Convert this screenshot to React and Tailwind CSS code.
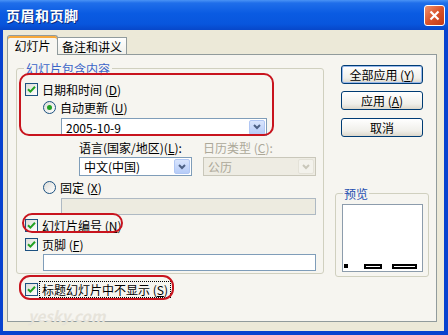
import React from 'react'

function Check({ checked = true }) {
  return (
    <span className="w-[13px] h-[13px] shrink-0 border border-[#1C5180] bg-[linear-gradient(135deg,#DCDCD7,#FFFFFF)] flex items-center justify-center">
      {checked && (
        <svg width="9" height="9" viewBox="0 0 9 9">
          <path d="M1 4.2 L3.4 6.6 L8 1.8" stroke="#21A121" strokeWidth="2" fill="none" />
        </svg>
      )}
    </span>
  )
}

function Radio({ checked }) {
  return (
    <span className="w-[13px] h-[13px] shrink-0 rounded-full border border-[#1C5180] bg-[linear-gradient(135deg,#DCDCD7,#FFFFFF)] flex items-center justify-center">
      {checked && <span className="w-[5px] h-[5px] rounded-full bg-[#21A121]" />}
    </span>
  )
}

function Arrow({ disabled }) {
  return (
    <span
      className={
        disabled
          ? 'w-[16px] h-[15px] rounded-[2px] border border-[#E4E2D8] bg-[#F3F2EC] flex items-center justify-center'
          : 'w-[16px] h-[15px] rounded-[2px] border border-[#B1C7F4] bg-[linear-gradient(to_bottom,#D9E5FD,#B6CCF8)] flex items-center justify-center'
      }
    >
      <svg width="8" height="6" viewBox="0 0 8 6">
        <path d="M1 1 L4 4 L7 1" stroke={disabled ? '#C9C7BA' : '#4D6185'} strokeWidth="2" fill="none" />
      </svg>
    </span>
  )
}

function Combo({ value, className, disabled }) {
  return (
    <div
      className={
        (disabled
          ? 'border-[#C9C7BA] bg-[#EEECE3] text-[#ACA899] '
          : 'border-[#7F9DB9] bg-white text-black ') +
        'border flex items-center justify-between pl-[4px] pr-[1px] ' +
        className
      }
    >
      <span>{value}</span>
      <Arrow disabled={disabled} />
    </div>
  )
}

function Btn({ children, def }) {
  return (
    <button
      className={
        'w-[82px] h-[19px] rounded-[3px] border border-[#003C74] bg-[linear-gradient(to_bottom,#FFFFFF,#F0EFEA_70%,#DCD7CB)] flex items-center justify-center text-black ' +
        (def ? 'shadow-[inset_0_0_0_1px_#98B8EA]' : '')
      }
    >
      {children}
    </button>
  )
}

export default function App() {
  return (
    <div className="w-[448px] h-[335px] flex flex-col bg-[#0842CF] font-['Noto_Sans_CJK_SC','Liberation_Sans',sans-serif] text-[12px] leading-[13px] text-black">
      <div className="h-[30px] shrink-0 flex items-center justify-between pl-[6px] pr-[3px] bg-[linear-gradient(to_bottom,#4A93F5_0%,#1F6EEA_10%,#0A5BE2_45%,#0856DD_80%,#0747C9_100%)]">
        <span className="text-white font-bold text-[14px] tracking-[0.5px] [text-shadow:1px_1px_0_#0A2A80]">页眉和页脚</span>
        <span className="w-[21px] h-[21px] rounded-[3px] border border-white bg-[linear-gradient(135deg,#F0926E,#D9532B_50%,#C13A16)] flex items-center justify-center">
          <svg width="11" height="11" viewBox="0 0 11 11">
            <path d="M1.5 1.5 L9.5 9.5 M9.5 1.5 L1.5 9.5" stroke="white" strokeWidth="2.2" />
          </svg>
        </span>
      </div>

      <div className="flex-1 ml-[3px] mr-[4px] mb-[4px] bg-[#ECE9D8] pl-[4px] pr-[7px] pt-[5px] flex flex-col">
        <div className="flex items-end h-[19px]">
          <div className="relative z-10 -mb-px h-[20px] w-[51px] border border-b-0 border-[#919B9C] bg-[#F7F6F1] rounded-t-[3px] shadow-[inset_0_2px_0_#F7A839] flex items-center justify-center">
            幻灯片
          </div>
          <div className="h-[17px] w-[69px] border border-b-0 border-l-0 border-[#919B9C] bg-[linear-gradient(to_bottom,#FFFFFF,#F0F0EA)] flex items-center justify-center">
            备注和讲义
          </div>
        </div>

        <div className="relative h-[268px] border border-[#919B9C] bg-[#F6F5F0] flex items-start">
          <div className="ml-[8px] mt-[13px] flex flex-col">
            <div className="relative w-[308px] h-[206px] border border-[#D0D0BF] rounded-[3px] pl-[8px] flex flex-col">
              <span className="absolute left-[7px] top-[-7px] px-[2px] bg-[#F6F5F0] text-[#3A64C8]">幻灯片包含内容</span>

              <div className="mt-[14px] flex items-center gap-[4px] h-[13px]">
                <Check />
                <span>日期和时间 (<u>D</u>)</span>
              </div>
              <div className="mt-[5px] ml-[18px] flex items-center gap-[4px] h-[13px]">
                <Radio checked />
                <span>自动更新 (<u>U</u>)</span>
              </div>
              <Combo value="2005-10-9" className="mt-[4px] ml-[36px] w-[206px] h-[18px]" />
              <div className="mt-[4px] ml-[54px] h-[14px] flex items-center">
                <span className="w-[124px]">语言(国家/地区)(<u>L</u>):</span>
                <span className="text-[#ACA899]">日历类型 (<u>C</u>):</span>
              </div>
              <div className="mt-[3px] ml-[54px] flex gap-[11px]">
                <Combo value="中文(中国)" className="w-[113px] h-[19px]" />
                <Combo value="公历" className="w-[113px] h-[19px]" disabled />
              </div>
              <div className="mt-[5px] ml-[18px] flex items-center gap-[4px] h-[13px]">
                <Radio />
                <span>固定 (<u>X</u>)</span>
              </div>
              <div className="mt-[4px] ml-[36px] w-[255px] h-[17px] border border-[#AEB9C3] bg-[#EDEBE0]" />
              <div className="mt-[4px] flex items-center gap-[4px] h-[13px]">
                <Check />
                <span>幻灯片编号 (<u>N</u>)</span>
              </div>
              <div className="mt-[6px] flex items-center gap-[4px] h-[13px]">
                <Check />
                <span>页脚 (<u>F</u>)</span>
              </div>
              <div className="mt-[3px] ml-[18px] w-[273px] h-[17px] border border-[#7F9DB9] bg-white" />
            </div>

            <div className="mt-[9px] ml-[9px] flex items-center gap-[1px] h-[13px]">
              <Check />
              <span className="border border-dotted border-black px-[2px] py-[1px]">标题幻灯片中不显示 (<u>S</u>)</span>
            </div>
          </div>

          <div className="ml-[11px] pt-[10px] flex flex-col">
            <div className="ml-[6px] flex flex-col">
              <Btn def>全部应用 (<u>Y</u>)</Btn>
              <div className="mt-[7px]">
                <Btn>应用 (<u>A</u>)</Btn>
              </div>
              <div className="mt-[8px]">
                <Btn>取消</Btn>
              </div>
            </div>
            <div className="relative mt-[56px] w-[94px] h-[84px] border border-[#D0D0BF] rounded-[3px]">
              <span className="absolute left-[7px] top-[-7px] px-[1px] bg-[#F6F5F0] text-[#1F4FB0]">预览</span>
              <div className="ml-[6px] mt-[10px] w-[81px] h-[68px] border border-[#8C9CAC] bg-white flex items-end gap-[16px] pl-[1px] pb-[2px]">
                <span className="w-[4px] h-[4px] bg-black mb-[1px]" />
                <span className="w-[18px] h-[5px] border-2 border-black" />
                <span className="w-[25px] h-[5px] border-2 border-black ml-[-6px]" />
              </div>
            </div>
          </div>

          <div className="absolute left-[11px] top-[18px] w-[255px] h-[63px] border-2 border-[#C8141E] rounded-[10px]" />
          <div className="absolute left-[14px] top-[158px] w-[101px] h-[20px] border-2 border-[#C8141E] rounded-[10px]" />
          <div className="absolute left-[11px] top-[220px] w-[155px] h-[25px] border-2 border-[#C8141E] rounded-[11px]" />
          <span className="absolute left-[20px] top-[254px] text-[15px] font-bold italic text-[#E6E3DA]">yesky.com</span>
        </div>
      </div>
    </div>
  )
}
